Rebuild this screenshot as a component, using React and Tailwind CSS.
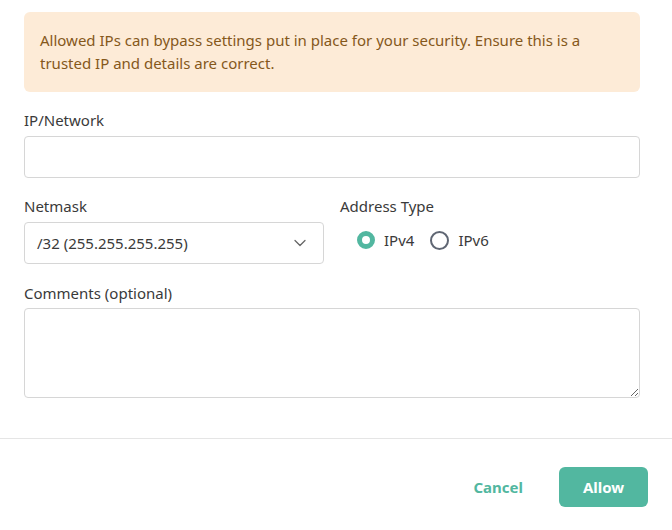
import { useState } from "react";
import { ChevronDown } from "lucide-react";

const font = { fontFamily: '"Noto Sans", "Open Sans", sans-serif' };

const Radio = ({ checked, label, onClick }) => (
    <button type="button" onClick={onClick} className="flex items-center gap-[9px] text-[15px] text-[#3a3a3a]">
        {checked
            ? <span className="w-[18px] h-[18px] rounded-full border-[5px] border-[#52b7a0] bg-white" />
            : <span className="w-[19px] h-[19px] rounded-full border-2 border-[#5f6673] bg-white" />}
        {label}
    </button>
);

const App = () => {
    const [type, setType] = useState("ipv4");
    return (
        <div className="w-[672px] h-[530px] bg-white flex flex-col" style={font}>
            <div className="pl-6 pr-8 pt-3">
                <div className="bg-[#fdebd7] rounded-md px-4 py-[17px] text-[15px] leading-[23px] text-[#85581b]">
                    Allowed IPs can bypass settings put in place for your security. Ensure this is a trusted IP and details are correct.
                </div>
                <div className="mt-[18px]">
                    <label className="block text-[15px] text-[#3a3a3a] leading-5 mb-[6px]">IP/Network</label>
                    <input className="w-full h-[42px] border border-[#d6d6d6] rounded px-3 outline-none" />
                </div>
                <div className="flex gap-4 mt-[18px]">
                    <div className="w-[300px]">
                        <label className="block text-[15px] text-[#3a3a3a] leading-5 mb-[6px]">Netmask</label>
                        <div className="h-[42px] border border-[#d6d6d6] rounded flex items-center justify-between pl-3 pr-[13px] text-[15px] text-[#3a3a3a]">
                            <span>/32 (255.255.255.255)</span>
                            <ChevronDown className="w-5 h-5 text-[#666]" strokeWidth={1.5} />
                        </div>
                    </div>
                    <div className="flex-1">
                        <label className="block text-[15px] text-[#3a3a3a] leading-5 mb-[13px]">Address Type</label>
                        <div className="flex items-center gap-4 pl-[17px]">
                            <Radio checked={type === "ipv4"} label="IPv4" onClick={() => setType("ipv4")} />
                            <Radio checked={type === "ipv6"} label="IPv6" onClick={() => setType("ipv6")} />
                        </div>
                    </div>
                </div>
                <div className="mt-[19px]">
                    <label className="block text-[15px] text-[#3a3a3a] leading-5 mb-[5px]">Comments (optional)</label>
                    <textarea className="w-full h-[90px] border border-[#d6d6d6] rounded px-3 py-2 outline-none block" />
                </div>
            </div>
            <div className="border-t border-[#e5e5e5] mt-[40px] flex justify-end items-center gap-9 pr-6 pt-7">
                <button className="text-[15px] font-bold text-[#52b7a0]">Cancel</button>
                <button className="h-10 w-[89px] rounded-md bg-[#52b7a0] text-white text-[15px] font-bold">Allow</button>
            </div>
        </div>
    );
};
export default App;
